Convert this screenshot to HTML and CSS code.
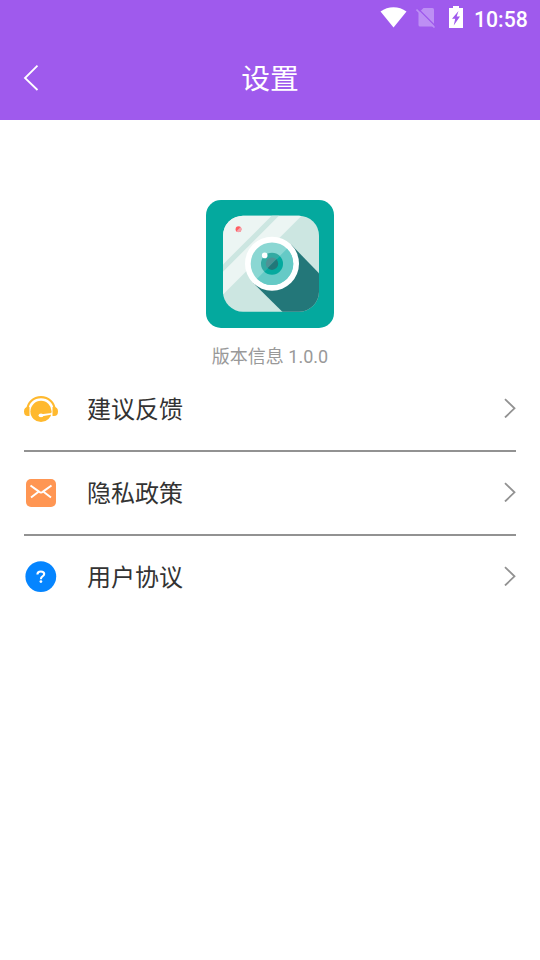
FILE: index.html
```html
<!DOCTYPE html>
<html lang="zh-CN">
<head>
<meta charset="utf-8">
<title>设置</title>
<link rel="stylesheet" href="styles.css">
</head>
<body>
<header class="header">
  <div class="status">
    <svg class="wifi" width="28" height="22" viewBox="0 0 28 22"><path d="M.5 5.500C8-.3 19-.3 26.500 5.500L13.500 21.500Z" fill="#fff"/></svg>
    <svg class="sim" width="20" height="22" viewBox="0 0 20 22"><path d="M7.500 2H16.500q1.500 0 1.500 1.500V19q0 1.500-1.500 1.500H4q-1.500 0-1.500-1.500V7Z" fill="#bd8ff4"/><path d="M1.600 2.300L20 20.700" stroke="#9f5aed" stroke-width="1.400"/><path d="M.5 3.500L18.500 21.500" stroke="#bd8ff4" stroke-width="1.600"/></svg>
    <svg class="battery" width="14" height="22" viewBox="0 0 14 22"><path d="M4 0h6v2h4v20H0V2h4Z" fill="#fff"/><path d="M9.500 5L3 12.800H6.200L4.700 19.500L11 10.500H7.700Z" fill="#9f5aed"/></svg>
    <span class="clock">10:58</span>
  </div>
  <div class="titlebar">
    <svg class="back" width="16" height="28" viewBox="0 0 16 28"><path d="M14.500 1.700L2 14L14.500 26" fill="none" stroke="#fff" stroke-width="1.800"/></svg>
    <h1 class="title">设置</h1>
  </div>
</header>
<main class="content">
  <section class="about">
    <svg class="logo" width="128" height="128" viewBox="0 0 128 128">
      <defs>
        <clipPath id="body"><rect x="17" y="15.700" width="96" height="96" rx="20"/></clipPath>
        <clipPath id="shade"><path d="M108 21.700V106H23.700Z"/></clipPath>
      </defs>
      <rect width="128" height="128" rx="15" fill="#04a99e"/>
      <g clip-path="url(#body)">
        <path d="M17 15H113V112H17Z" fill="#cce6e1"/>
        <path d="M17 15H96.400L17 94.400Z" fill="#ecf5f3"/>
        <path d="M66.400 15H73.700L17 71.700V64.400Z" fill="#cce6e1"/>
        <path d="M85.100 44.600L114 74.200V113H77.600L47 82.800Z" fill="#237779"/>
      </g>
      <circle cx="66" cy="63.700" r="27" fill="#fff"/>
      <circle cx="66" cy="63.700" r="21.300" fill="#8bd7d3"/>
      <circle cx="66" cy="63.700" r="11" fill="#33aaa2"/>
      <circle cx="66" cy="63.700" r="6.200" fill="#4f9295"/>
      <g clip-path="url(#shade)">
        <circle cx="66" cy="63.700" r="21.300" fill="#65cac6"/>
        <circle cx="66" cy="63.700" r="11" fill="#04a99e"/>
        <circle cx="66" cy="63.700" r="6.200" fill="#237779"/>
      </g>
      <circle cx="58.700" cy="55.400" r="2.800" fill="#fff"/>
      <circle cx="32.500" cy="29.200" r="2.900" fill="#ff5d62"/>
      <path d="M34.600 27.100A2.900 2.900 0 0 1 30.500 31.200Z" fill="#f5a3ac"/>
    </svg>
    <p class="version">版本信息 1.0.0</p>
  </section>
  <ul class="menu">
    <li class="row">
      <svg class="icon" width="34" height="34" viewBox="0 0 34 34"><path d="M3.500 17.500A13.500 12.300 0 0 1 30.500 17.500" fill="none" stroke="#ffb92e" stroke-width="2.200"/><path d="M5.500 15V24H4Q0 24 0 19.500T4 15ZM28.500 15V24H30Q34 24 34 19.500T30 15Z" fill="#ffb92e"/><circle cx="17" cy="19.400" r="10.600" fill="#ffb92e"/><path d="M17 22.200L28 21V22.400L17 24.500Z" fill="#fff"/><ellipse cx="17" cy="23.400" rx="2.500" ry="1.800" fill="#fff"/></svg>
      <span class="label">建议反馈</span>
      <svg class="chevron" width="12" height="20" viewBox="0 0 12 20"><path d="M1 1.100L10.500 10.300L1 19.500" fill="none" stroke="#929292" stroke-width="1.800"/></svg>
    </li>
    <li class="row">
      <svg class="icon" width="34" height="34" viewBox="0 0 34 34"><rect x="2" y="3" width="30" height="28" rx="5" fill="#ff9653"/><path d="M6.500 9.500L15 15.600Q17 17.500 19 15.600L27.500 9.500M7 21.500L14.500 15.800M27 21.500L19.500 15.800" fill="none" stroke="#fff" stroke-width="2"/></svg>
      <span class="label">隐私政策</span>
      <svg class="chevron" width="12" height="20" viewBox="0 0 12 20"><path d="M1 1.100L10.500 10.300L1 19.500" fill="none" stroke="#929292" stroke-width="1.800"/></svg>
    </li>
    <li class="row">
      <svg class="icon" width="34" height="34" viewBox="0 0 34 34"><circle cx="16.800" cy="16.600" r="15.400" fill="#0585ff"/><path d="M13.400 14.500Q13.400 11.500 16.800 11.500Q20.200 11.500 20.200 14.100Q20.200 15.500 18.500 16.400Q16.900 17.300 16.900 19.300" fill="none" stroke="#fff" stroke-width="2.100"/><circle cx="16.900" cy="21.600" r="1.400" fill="#fff"/></svg>
      <span class="label">用户协议</span>
      <svg class="chevron" width="12" height="20" viewBox="0 0 12 20"><path d="M1 1.100L10.500 10.300L1 19.500" fill="none" stroke="#929292" stroke-width="1.800"/></svg>
    </li>
  </ul>
</main>
</body>
</html>
```
FILE: styles.css
```css
* { box-sizing: border-box; }
body {
  margin: 0;
  min-height: 960px;
  background: #fff;
  font-family: Roboto, "Noto Sans CJK SC", sans-serif;
}
.header {
  height: 120px;
  background: #9f5aed;
  color: #fff;
}
.status {
  display: flex;
  justify-content: flex-end;
  height: 36px;
  padding: 6px 12px 0 0;
}
.wifi { margin-right: 8px; }
.sim { margin-right: 13px; }
.battery { margin-right: 11px; }
.clock {
  font-size: 21.200px;
  line-height: 27px;
  font-weight: 500;
  width: 54px;
  white-space: nowrap;
}
.titlebar {
  display: grid;
  grid-template-columns: 40px 1fr 40px;
  align-items: center;
  height: 84px;
  padding: 0 23px;
}
.title {
  margin: 0;
  padding-top: 2px;
  text-align: center;
  font-size: 28.800px;
  line-height: 40px;
  font-weight: 400;
}
.content { padding: 80px 24px 0; }
.about {
  display: flex;
  flex-direction: column;
  align-items: center;
}
.logo { display: block; }
.version {
  margin: 18px 0 0;
  font-size: 18px;
  line-height: 22px;
  color: #999;
}
.menu {
  margin: 0;
  padding: 0;
  list-style: none;
}
.row {
  display: flex;
  align-items: center;
  height: 84px;
  border-bottom: 2px solid #929292;
}
.row:last-child { border-bottom-color: transparent; }
.label {
  flex: 1;
  margin-left: 29px;
  padding-top: 2px;
  font-size: 24px;
  line-height: 36px;
  color: #333;
}
.chevron { margin-bottom: 2px; }
```
